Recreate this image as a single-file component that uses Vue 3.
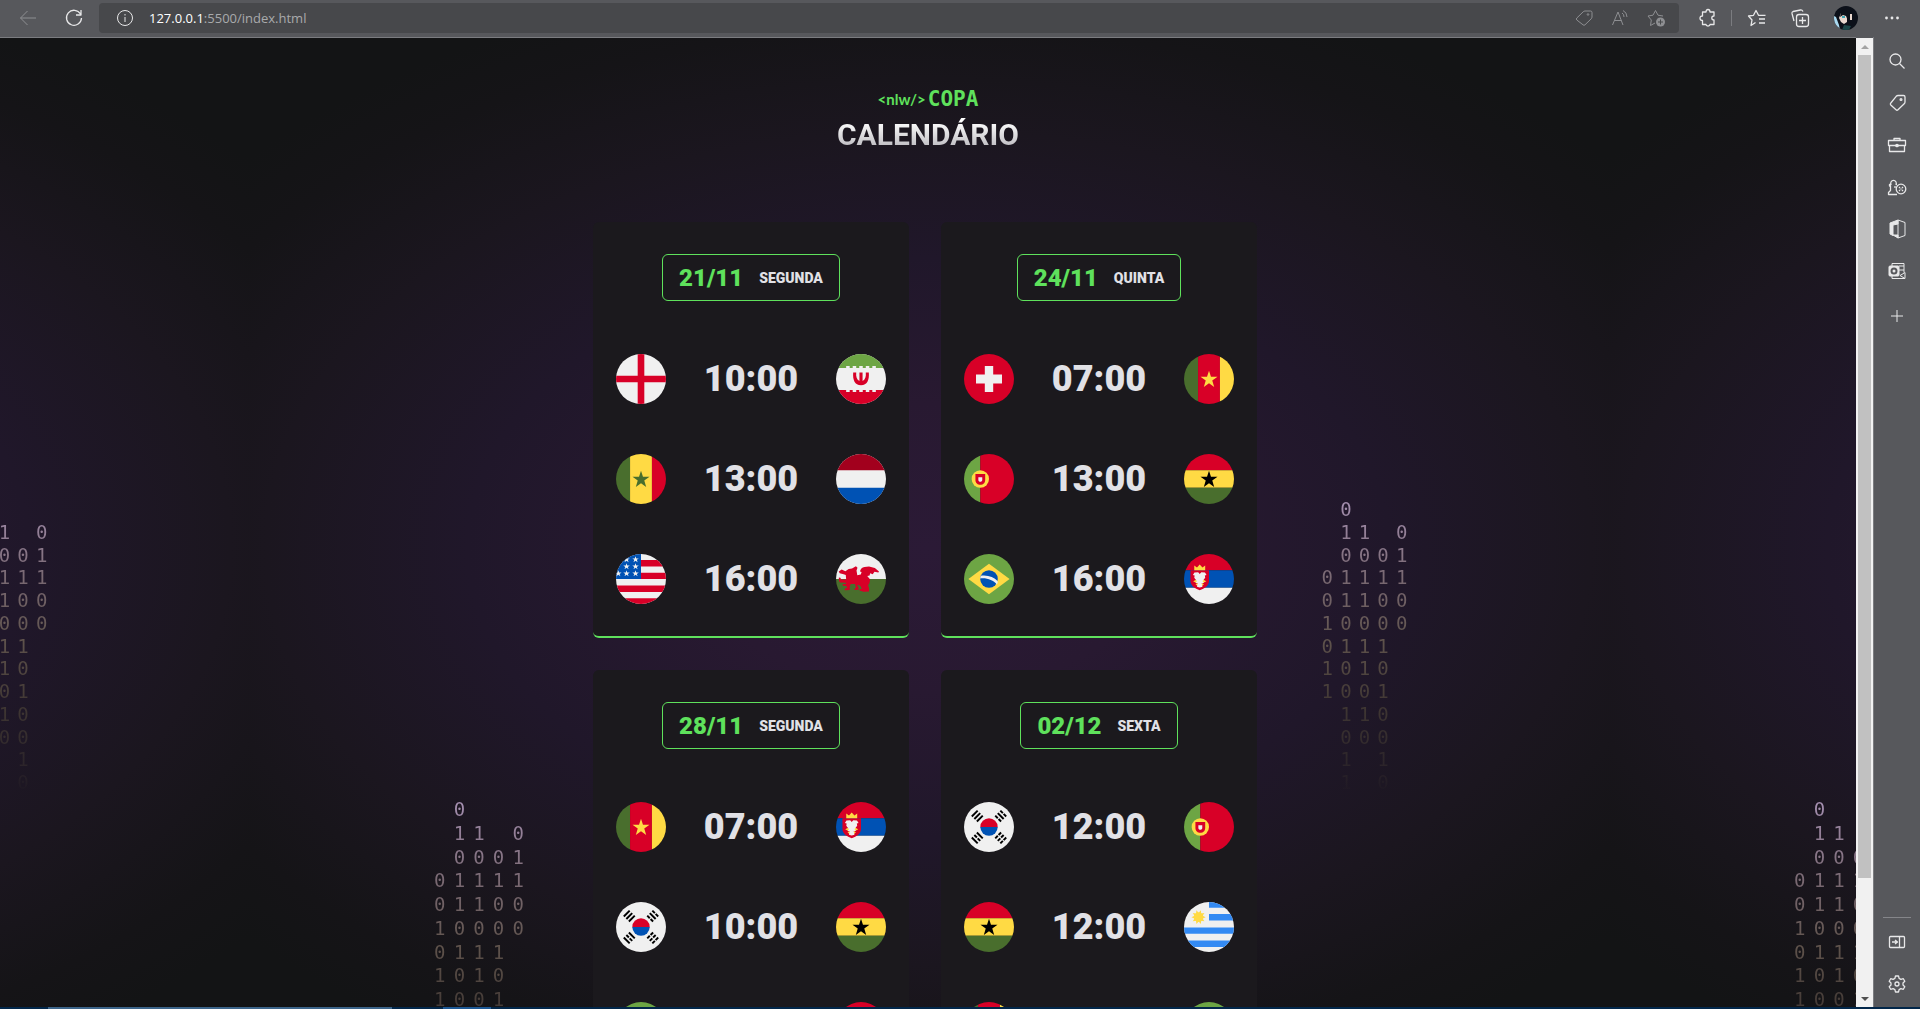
<script setup>
const cards = [
  {
    date: '21/11',
    day: 'segunda',
    games: [
      { home: 'england', time: '10:00', away: 'iran' },
      { home: 'senegal', time: '13:00', away: 'netherlands' },
      { home: 'usa', time: '16:00', away: 'wales' },
    ],
  },
  {
    date: '24/11',
    day: 'quinta',
    games: [
      { home: 'switzerland', time: '07:00', away: 'cameroon' },
      { home: 'portugal', time: '13:00', away: 'ghana' },
      { home: 'brazil', time: '16:00', away: 'serbia' },
    ],
  },
  {
    date: '28/11',
    day: 'segunda',
    games: [
      { home: 'cameroon', time: '07:00', away: 'serbia' },
      { home: 'korea', time: '10:00', away: 'ghana' },
      { home: 'brazil', time: '13:00', away: 'switzerland' },
    ],
  },
  {
    date: '02/12',
    day: 'sexta',
    games: [
      { home: 'korea', time: '12:00', away: 'portugal' },
      { home: 'ghana', time: '12:00', away: 'uruguay' },
      { home: 'cameroon', time: '16:00', away: 'brazil' },
    ],
  },
]

// Columns of falling bits; a blank leaves the cell empty
const rain = [
  ' 0   ',
  ' 11 0',
  ' 0001',
  '01111',
  '01100',
  '10000',
  '0111 ',
  '1010 ',
  '1001 ',
  ' 110 ',
  ' 000 ',
  ' 1 1 ',
  ' 1 0 ',
]
const bits = rain.join('').split('')
const rainSpots = ['upper-left', 'upper-right', 'lower-left', 'lower-right']
</script>

<template>
  <div class="browser">
    <svg class="sprite" aria-hidden="true">
      <symbol id="star" viewBox="0 0 512 512">
        <path d="M256 171l20.300 61h66.700l-53.500 40 19.500 66-53-38-53 38 19.500-66-53.500-40h66.700z" />
      </symbol>
      <symbol id="england" viewBox="0 0 512 512">
        <path fill="#f0f0f0" d="M0 0h512v512H0z" />
        <path fill="#d80027" d="M222 0h68v222h222v68H290v222h-68V290H0v-68h222z" />
      </symbol>
      <symbol id="iran" viewBox="0 0 512 512">
        <path fill="#f0f0f0" d="M0 0h512v512H0z" />
        <path fill="#6da544" d="M0 0h512v144h-104v-22h-36v22h-31v-22h-36v22h-31v-22h-36v22h-31v-22h-36v22h-31v-22h-36v22H0z" />
        <path fill="#d80027" d="M0 512h512V368h-104v22h-36v-22h-31v22h-36v-22h-31v22h-36v-22h-31v22h-36v-22h-31v22h-36v-22H0z" />
        <path fill="#d80027" d="M176 189h31c-4 44 5 72 33 87v-87h32v87c28-15 37-43 33-87h31c6 78-16 130-80 130s-86-52-80-130z" />
      </symbol>
      <symbol id="senegal" viewBox="0 0 512 512">
        <path fill="#496e2d" d="M0 0h144v512H0z" />
        <path fill="#ffda44" d="M144 0h224v512H144z" />
        <path fill="#d80027" d="M368 0h144v512H368z" />
        <use href="#star" fill="#496e2d" />
      </symbol>
      <symbol id="netherlands" viewBox="0 0 512 512">
        <path fill="#f0f0f0" d="M0 0h512v512H0z" />
        <path fill="#a2001d" d="M0 0h512v167H0z" />
        <path fill="#0052b4" d="M0 345h512v167H0z" />
      </symbol>
      <symbol id="usa" viewBox="0 0 512 512">
        <path fill="#f0f0f0" d="M0 0h512v512H0z" />
        <path fill="#d80027" d="M256 62h256v66H256zM256 192h256v64H256zM0 322h512v66H0zM0 454h512v58H0z" />
        <path fill="#0052b4" d="M0 0h256v256H0z" />
        <g fill="#f0f0f0">
          <path id="s" d="M200 22l8 23h25l-20 15 8 24-21-15-21 15 8-24-20-15h25z" />
          <use href="#s" x="-92" />
          <use href="#s" y="72" />
          <use href="#s" x="-92" y="72" />
          <use href="#s" y="144" />
          <use href="#s" x="-92" y="144" />
          <use href="#s" x="-176" y="144" />
        </g>
      </symbol>
      <symbol id="wales" viewBox="0 0 512 512">
        <path fill="#f0f0f0" d="M0 0h512v256H0z" />
        <path fill="#496e2d" d="M0 256h512v256H0z" />
        <path fill="#d80027" d="M96 176l34-22 34-6 40-22 16 16-10 26 8 50 36-8 8-26-16-4c2-22 20-42 46-46l46-6 60 16 42 36-6 10-40-8-18 26-26-12-6 24-24 6 30 34-8 40-14 20 10 30v34l-56 2-40-12-2-16h24l-14-30-24-14-10 8 16 22-2 22-40 2 2-18 14-4-12-40h-44l-8 24-2 38-50 2 2-20h20l-4-22-40-2 2-18h34l-4-14-58-2-10-12-4-36 14-4 12 22 50-2-4-46-22-6-40-12-10-16 30-22z" />
      </symbol>
      <symbol id="switzerland" viewBox="0 0 512 512">
        <path fill="#d80027" d="M0 0h512v512H0z" />
        <path fill="#f0f0f0" d="M389 211h-90v-88h-86v88h-90v90h90v88h86v-88h90z" />
      </symbol>
      <symbol id="cameroon" viewBox="0 0 512 512">
        <path fill="#496e2d" d="M0 0h144v512H0z" />
        <path fill="#d80027" d="M144 0h224v512H144z" />
        <path fill="#ffda44" d="M368 0h144v512H368z" />
        <use href="#star" fill="#ffda44" />
      </symbol>
      <symbol id="portugal" viewBox="0 0 512 512">
        <path fill="#6da544" d="M0 0h167v512H0z" />
        <path fill="#d80027" d="M167 0h345v512H167z" />
        <circle cx="167" cy="256" r="89" fill="#ffda44" />
        <path fill="#d80027" d="M117 206v60c0 66 100 66 100 0v-60z" />
        <path fill="#f0f0f0" d="M147 237v30c0 24 40 24 40 0v-30z" />
      </symbol>
      <symbol id="ghana" viewBox="0 0 512 512">
        <path fill="#d80027" d="M0 0h512v167H0z" />
        <path fill="#ffda44" d="M0 167h512v178H0z" />
        <path fill="#496e2d" d="M0 345h512v167H0z" />
        <use href="#star" fill="#000" />
      </symbol>
      <symbol id="brazil" viewBox="0 0 512 512">
        <path fill="#6da544" d="M0 0h512v512H0z" />
        <path fill="#ffda44" d="M256 100l211 156-211 156L45 256z" />
        <circle cx="256" cy="256" r="90" fill="#0052b4" />
        <path fill="#f0f0f0" d="M166 250c0-10 2-20 6-28 72-10 132 12 174 56 0 12-4 24-9 34-40-46-100-70-171-62z" />
      </symbol>
      <symbol id="serbia" viewBox="0 0 512 512">
        <path fill="#d80027" d="M0 0h512v167H0z" />
        <path fill="#0052b4" d="M0 167h512v178H0z" />
        <path fill="#f0f0f0" d="M0 345h512v167H0z" />
        <path fill="#d80027" d="M66 167v108c0 50 46 82 95 96 49-14 95-46 95-96V167z" />
        <path fill="#ffda44" d="M105 166v-48l28 20 28-30 28 30 28-20v48zM94 280l30-16 80 46-20 18zM228 280l-30-16-80 46 20 18z" />
        <path fill="#f0f0f0" d="M161 204l16-18 38 4 16 24-18 6 4 24-28 36 16 14-24 6 8 36-28 8-28-8 8-36-24-6 16-14-28-36 4-24-18-6 16-24 38-4z" />
      </symbol>
      <symbol id="korea" viewBox="0 0 512 512">
        <path fill="#f0f0f0" d="M0 0h512v512H0z" />
        <path fill="#d80027" d="M167 256a89 89 0 01178 0c0 20-178 20-178 0z" />
        <path fill="#0052b4" d="M167 256a89 89 0 00178 0z" />
        <g fill="none" stroke="#000" stroke-width="20">
          <path d="M80 148l60-60M106 174l60-60M132 200l60-60" />
          <path d="M372 88l26 26M406 122l26 26M346 114l60 60M320 140l26 26M354 174l26 26" />
          <path d="M80 364l60 60M106 338l26 26M140 372l26 26M132 312l60 60" />
          <path d="M432 364l-26 26M398 398l-26 26M406 338l-26 26M372 372l-26 26M380 312l-26 26M346 346l-26 26" />
        </g>
      </symbol>
      <symbol id="uruguay" viewBox="0 0 512 512">
        <path fill="#f0f0f0" d="M0 0h512v512H0z" />
        <path fill="#338af3" d="M256 0h256v60H256zM256 124h256v66H256zM0 260h512v64H0zM0 394h512v66H0z" />
        <path fill="#ffda44" d="M222 155l-31 14 18 28-33-6-3 34-23-25-23 25-4-34-33 6 17-28-31-14 31-15-17-28 33 6 4-34 23 25 23-25 3 34 33-6-18 28z" />
        <circle cx="150" cy="155" r="48" fill="#ffda44" />
      </symbol>
    </svg>

    <header class="toolbar">
      <button class="nav dim" type="button" aria-label="Voltar">
        <svg class="icon" viewBox="0 0 20 20"><path d="M18 10H2.500M9.500 3L2.500 10l7 7" /></svg>
      </button>
      <button class="nav" type="button" aria-label="Atualizar">
        <svg class="icon bold" viewBox="0 0 20 20"><path d="M16.500 6A7.500 7.500 0 1 0 17.500 10M17 2v5h-5" /></svg>
      </button>
      <div class="address">
        <svg class="icon info" viewBox="0 0 20 20"><circle cx="10" cy="10" r="7.500" /><path d="M10 9v5M10 6v1.500" /></svg>
        <a class="url" href="#"><b>127.0.0.1</b>:5500/index.html</a>
        <button class="tool dim" type="button" aria-label="Compras">
          <svg class="icon" viewBox="0 0 20 20"><path d="M11 3h5.500q1.500 0 1.500 1.500V9q0 1-.8 1.800l-6.200 6q-1 1-2 0L2.800 12q-1-1 0-2l6.400-6.200Q10 3 11 3z" /><circle cx="14" cy="6.500" r=".8" /></svg>
        </button>
        <button class="tool dim" type="button" aria-label="Ler em voz alta">
          <svg class="icon" viewBox="0 0 20 20"><path d="M2.500 17L8 4l5 13M4.500 12.500h7M12 5q2 1 2 4M13 2.500q4 2 4 6.500" /></svg>
        </button>
        <button class="tool dim" type="button" aria-label="Adicionar aos favoritos">
          <svg class="icon" viewBox="0 0 20 20"><path d="M9 15l-4.500 2.500.8-5.500L2 8l5-.8L9.500 2.500 12 7.200l5 .8" /><circle cx="14.500" cy="14" r="4.500" fill="#8e8f92" stroke="none" /><path d="M14.500 11.500v5M12 14h5" stroke="#47484b" /></svg>
        </button>
      </div>
      <button class="action" type="button" aria-label="Extensões">
        <svg class="icon bold" viewBox="0 0 20 20"><path d="M4.500 4H8q0-2.500 2-2.500t2 2.500h4v4q-2.200 0-2.200 2t2.200 2v4.500h-4q0 1.500-2 1.500t-2-1.500H4.500V12.500Q2 12.500 2 10.200T4.500 8z" /></svg>
      </button>
      <span class="divider"></span>
      <button class="action narrow" type="button" aria-label="Favoritos">
        <svg class="icon bold" viewBox="0 0 20 20"><path d="M8.500 14.500l-4.500 3 1-5.500L1.500 8l5-.7L9 2.500l2.500 4.800h7M12 11h6M12 15h6" /></svg>
      </button>
      <button class="action" type="button" aria-label="Coleções">
        <svg class="icon bold" viewBox="0 0 20 20"><rect x="6.500" y="6.500" width="12" height="12" rx="2.500" /><path d="M12.500 9v7M9 12.500h7M4 13L2 5.500Q1.700 4 3 3.500L10.500 2q1.500-.3 2.500 1.500" /></svg>
      </button>
      <button class="action" type="button" aria-label="Perfil">
        <svg class="avatar" viewBox="0 0 24 24">
          <path fill="#0c1019" d="M0 0h24v24H0z" />
          <path fill="#a9d8ef" d="M0 10l2 1 3 8 1 5H0z" />
          <path fill="#ead8cf" d="M7 7l3-2 3 4v7l-3 2-3-2-2-4z" />
          <path fill="#0c1019" d="M10 3l5 4-1 8-2-5-3-1-3 2 1-5z" />
          <path fill="#3fa4b4" d="M8 10h3v2H8z" />
          <path fill="#ead8cf" d="M16 8h2v6h-2z" />
          <path fill="#1c4648" d="M10 19l7 1-2 4H8z" />
        </svg>
      </button>
      <button class="action" type="button" aria-label="Mais opções">
        <svg class="icon" viewBox="0 0 20 20"><g fill="currentColor" stroke="none"><circle cx="4.500" cy="10" r="1.400" /><circle cx="10" cy="10" r="1.400" /><circle cx="15.500" cy="10" r="1.400" /></g></svg>
      </button>
    </header>

    <div class="workspace">
      <div class="page">
        <div v-for="spot in rainSpots" :key="spot" class="rain" :class="spot" aria-hidden="true">
          <span v-for="(bit, i) in bits" :key="i">{{ bit }}</span>
        </div>

        <main class="content">
          <p class="logo"><span class="nlw">&lt;nlw/&gt;</span><span class="copa">COPA</span></p>
          <h1 class="title">CALENDÁRIO</h1>
          <div class="cards">
            <section v-for="card in cards" :key="card.date" class="card">
              <h2 class="badge">{{ card.date }}<span class="day">{{ card.day }}</span></h2>
              <ul class="games">
                <li v-for="game in card.games" :key="game.home" class="game">
                  <svg class="flag" role="img" :aria-label="game.home"><use :href="'#' + game.home" /></svg>
                  <strong class="time">{{ game.time }}</strong>
                  <svg class="flag" role="img" :aria-label="game.away"><use :href="'#' + game.away" /></svg>
                </li>
              </ul>
            </section>
          </div>
        </main>
      </div>

      <div class="scrollbar" aria-hidden="true">
        <span class="arrow up"></span>
        <span class="track"><span class="thumb"></span></span>
        <span class="arrow down"></span>
      </div>

      <aside class="sidebar">
        <button class="side" type="button" aria-label="Pesquisar">
          <svg class="icon bold" viewBox="0 0 20 20"><circle cx="8.500" cy="8.500" r="5.500" /><path d="M12.500 12.500l5 5" /></svg>
        </button>
        <button class="side" type="button" aria-label="Compras">
          <svg class="icon bold" viewBox="0 0 20 20"><path d="M11 2.500h5.500q1.500 0 1.500 1.500v5q0 1-.8 1.800l-6.200 6q-1 1-2 0L3.800 12q-1-1 0-2l5.400-6.700q.8-.8 1.800-.8z" /><circle cx="14" cy="6.500" r=".9" /></svg>
        </button>
        <button class="side" type="button" aria-label="Ferramentas">
          <svg class="icon bold" viewBox="0 0 20 20"><path d="M7 5.500V3.500h6v2M1.500 5.500h17v5h-17zM2.500 10.500v6h15v-6" /><circle cx="10" cy="10.500" r="1.200" fill="currentColor" /></svg>
        </button>
        <button class="side" type="button" aria-label="Jogos">
          <svg class="icon bold" viewBox="0 0 20 20"><path d="M10 17.500H1.500v-2l2-2V9h-1V7.500H4a2.800 2.800 0 1 1 5 0h1M8 9v2" /><circle cx="14" cy="12" r="4.800" /><path d="M12 10l1 1M16 10l-1 1M12 14l1-1M16 14l-1-1M13.500 12h1" /></svg>
        </button>
        <button class="side" type="button" aria-label="Office">
          <svg class="icon" viewBox="0 0 20 20"><path d="M11 1L3 4v11l3 1.500V6l5-1zM6 16l5 3v-3z" fill="currentColor" /><path d="M11 1l7 2.500v13L11 19z" /></svg>
        </button>
        <button class="side" type="button" aria-label="Outlook">
          <svg class="icon" viewBox="0 0 20 20"><path d="M5 5V2.500h12v9M12 5h5M12 9h5M5 15v2.500h13v-6l-5 3 5 3" /><rect x="2" y="5" width="10" height="10" rx="1" fill="currentColor" /><circle cx="7" cy="10" r="2.500" stroke="#57585c" stroke-width="2" /></svg>
        </button>
        <button class="side plus" type="button" aria-label="Adicionar">
          <svg class="icon" viewBox="0 0 20 20"><path d="M10 4v12M4 10h12" /></svg>
        </button>
        <span class="rule"></span>
        <button class="side" type="button" aria-label="Ocultar barra lateral">
          <svg class="icon bold" viewBox="0 0 20 20"><rect x="2.500" y="4.500" width="15" height="11" rx="1" /><path d="M12.500 4.500v11M5 10h5M8 8l2.500 2L8 12" /></svg>
        </button>
        <button class="side" type="button" aria-label="Configurações">
          <svg class="icon bold" viewBox="0 0 20 20"><path d="M8.500 2h3l.6 2.400 1.800 1 2.400-.7 1.500 2.600-1.800 1.700v2l1.800 1.700-1.500 2.600-2.400-.7-1.800 1L11.500 18h-3l-.6-2.400-1.800-1-2.400.7-1.500-2.600L4 11V9L2.200 7.300l1.500-2.600 2.400.7 1.800-1z" /><circle cx="10" cy="10" r="2" /></svg>
        </button>
      </aside>
    </div>

    <div class="taskbar"></div>
  </div>
</template>

<style>
body {
  margin: 0;
}
</style>

<style scoped>
.browser {
  display: flex;
  flex-direction: column;
  height: 100vh;
  overflow: hidden;
  background: #57585c;
  color: #e8e8e9;
  font-family: Roboto, 'Liberation Sans', sans-serif;
}

.sprite {
  position: absolute;
  width: 0;
  height: 0;
}

button {
  display: flex;
  align-items: center;
  justify-content: center;
  padding: 0;
  border: 0;
  background: none;
  color: inherit;
}

.icon {
  width: 20px;
  height: 20px;
  fill: none;
  stroke: currentColor;
  stroke-width: 1;
  stroke-linejoin: round;
}

.icon.bold {
  stroke-width: 1.3;
}

.dim {
  color: #8e8f92;
}

/* Toolbar */
.toolbar {
  display: flex;
  align-items: center;
  gap: 4px;
  height: 36px;
  padding: 0 7px 1px;
}

.nav {
  width: 42px;
  height: 30px;
}

.address {
  display: flex;
  flex: 1;
  align-items: center;
  height: 30px;
  margin-right: 4px;
  padding: 0 5px 0 16px;
  border-radius: 4px;
  background: #47484b;
}

.info {
  margin-right: 14px;
}

.url {
  flex: 1;
  color: #a9aaac;
  font: 13px/20px 'Open Sans', 'Noto Sans', sans-serif;
  text-decoration: none;
}

.url b {
  color: #fff;
  font-weight: 400;
}

.tool {
  width: 36px;
  height: 30px;
}

.action {
  width: 42px;
  height: 30px;
}

.action.narrow {
  width: 36px;
}

.divider {
  width: 1px;
  height: 16px;
  margin: 0 3px 0 -2px;
  background: #7b7c80;
}

.avatar {
  width: 24px;
  height: 24px;
  border-radius: 50%;
}

/* Page */
.workspace {
  display: flex;
  flex: 1;
  min-height: 0;
}

.page {
  position: relative;
  flex: 1;
  overflow: hidden;
  border-top: 1px solid #7b7c80;
  background: #131416
    radial-gradient(ellipse 920px 580px at 50% 510px, #2b1a36 0%, #281931 25%, #20172a 50%, #1b161f 72%, #151417 90%, #131415 100%)
    top center / 1360px 100% repeat-x;
}

.rain {
  position: absolute;
  display: grid;
  grid-template-columns: repeat(5, 1fr);
  background: linear-gradient(#a892b4, #7c6b76 25%, #5f534c 48%, #403733 70%, #2a2329 92%, transparent);
  background-clip: text;
  color: transparent;
  font: 19px/22px 'DejaVu Sans Mono', monospace;
  text-align: center;
}

.upper-left,
.upper-right {
  top: 460px;
  width: 93px;
  height: 296px;
}

.lower-left,
.lower-right {
  top: 760px;
  width: 98px;
  height: 309px;
}

.upper-left {
  left: calc(50% - 970px);
}

.upper-right {
  left: calc(50% + 390px);
}

.lower-left {
  left: calc(50% - 498px);
}

.lower-right {
  left: calc(50% + 862px);
}

.content {
  position: relative;
  display: flex;
  flex-direction: column;
  align-items: center;
  padding-top: 48px;
}

.logo {
  display: flex;
  align-items: center;
  gap: 2px;
  margin: 0;
  color: #5fe15c;
  line-height: 26px;
}

.nlw {
  font-family: Lato, sans-serif;
  font-size: 15px;
  font-weight: 700;
}

.copa {
  font-family: 'DejaVu Sans Mono', monospace;
  font-size: 21px;
  font-weight: 700;
}

.title {
  margin: 0;
  background: linear-gradient(#fff 20%, #b4b2b8 85%);
  background-clip: text;
  color: transparent;
  font-size: 30px;
  font-weight: 700;
  line-height: 46px;
}

.cards {
  display: grid;
  grid-template-columns: repeat(2, 316px);
  gap: 32px;
  margin-top: 64px;
  padding-right: 6px;
}

.card {
  display: flex;
  flex-direction: column;
  align-items: center;
  padding: 32px 23px;
  border-bottom: 2px solid #5fe15c;
  border-radius: 6px;
  background: #1b191d;
}

.badge {
  display: flex;
  align-items: center;
  gap: 16px;
  height: 45px;
  margin: 0 0 53px;
  padding: 0 16px;
  border: 1px solid #5fe15c;
  border-radius: 6px;
  color: #5fe15c;
  font-size: 24px;
  font-weight: 900;
}

.day {
  color: #e1e1e6;
  font-size: 14px;
  text-transform: uppercase;
}

.games {
  display: flex;
  flex-direction: column;
  align-self: stretch;
  gap: 50px;
  margin: 0;
  padding: 0;
  list-style: none;
}

.game {
  display: flex;
  align-items: center;
  justify-content: space-between;
}

.flag {
  width: 50px;
  height: 50px;
  border-radius: 50%;
}

.time {
  color: #e1e1e6;
  font-size: 36px;
  font-weight: 900;
  line-height: 50px;
}

/* Scrollbar */
.scrollbar {
  display: flex;
  flex-direction: column;
  width: 17px;
  margin-top: 1px;
  background: #f1f1f1;
}

.arrow {
  display: flex;
  align-items: center;
  justify-content: center;
  height: 17px;
}

.arrow::before {
  border: 4px solid transparent;
  content: '';
}

.up::before {
  border-top: 0;
  border-bottom-color: #a3a3a3;
}

.down::before {
  border-top-color: #505050;
  border-bottom: 0;
}

.track {
  flex: 1;
  padding: 0 2px;
}

.thumb {
  display: block;
  height: 88%;
  background: #c1c1c1;
}

/* Sidebar */
.sidebar {
  display: flex;
  flex-direction: column;
  align-items: center;
  width: 46px;
  padding: 3px 0 2px;
  border-left: 1px solid #7b7c80;
}

.side {
  width: 42px;
  height: 42px;
}

.plus {
  margin-top: 3px;
}

.rule {
  width: 28px;
  height: 1px;
  margin: auto 0 3px;
  background: #85868a;
}

.taskbar {
  height: 2px;
  background: linear-gradient(90deg, #02274a 48px, #3c658a 48px 392px, #02274a 392px 443px, #1d5894 443px 491px, #02274a 491px);
}
</style>
